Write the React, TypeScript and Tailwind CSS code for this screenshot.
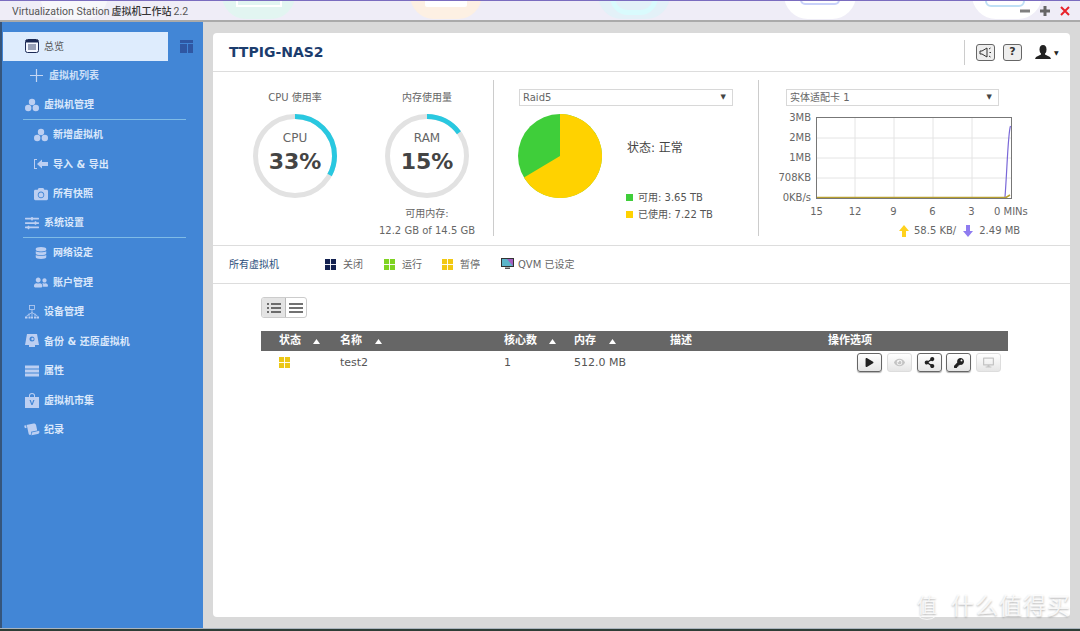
import type { ReactNode } from "react";
import {
  FaCamera,
  FaDatabase,
  FaDesktop,
  FaEye,
  FaKey,
  FaPlay,
  FaScroll,
  FaShareAlt,
  FaSlidersH,
  FaUserFriends,
} from "react-icons/fa";

const cjk = "font-['DejaVu_Sans','Noto_Sans_CJK_SC',sans-serif]";

function Blobs() {
  return (
    <svg viewBox="0 0 14 14" className="w-[14px] h-[14px]" fill="currentColor">
      <circle cx="7" cy="4" r="3.2" />
      <circle cx="3.2" cy="10" r="3.2" />
      <circle cx="10.8" cy="10" r="3.2" />
    </svg>
  );
}

function ImportIcon() {
  return (
    <svg viewBox="0 0 14 14" className="w-[14px] h-[14px]" fill="currentColor">
      <path d="M0 2h3v1H1v8h2v1H0z" />
      <path d="M3 7l5-4.500V5h6v4H8v2.500z" />
    </svg>
  );
}

function BackupIcon() {
  return (
    <svg viewBox="0 0 14 16" className="w-[14px] h-[16px]" fill="currentColor">
      <path d="M2 1h10l2 11H0z" />
      <rect x="4" y="12" width="6" height="2" />
      <circle cx="7" cy="6" r="2.500" fill="#4286d6" />
      <circle cx="7.500" cy="6" r="1.200" />
    </svg>
  );
}

function RowsIcon() {
  return (
    <svg viewBox="0 0 14 12" className="w-[14px] h-[12px]" fill="currentColor">
      <rect y="0.500" width="14" height="3" />
      <rect y="4.500" width="14" height="3" />
      <rect y="8.500" width="14" height="3" />
    </svg>
  );
}

function BagIcon() {
  return (
    <svg viewBox="0 0 14 15" className="w-[14px] h-[15px]" fill="currentColor">
      <path d="M4 4V2.500a3 2.500 0 0 1 6 0V4H9V2.500a2 1.500 0 0 0-4 0V4z" />
      <path d="M0 4h14v11H0z" />
      <path d="M4.500 7h1.300L7 10.500 8.200 7h1.300L7.600 12H6.400z" fill="#4286d6" />
    </svg>
  );
}

function TreeIcon() {
  return (
    <svg viewBox="0 0 14 14" className="w-[14px] h-[14px]" fill="none" stroke="currentColor" strokeWidth="0.800">
      <rect x="4.500" y="0.500" width="5" height="4" />
      <path d="M7 4.500V11M7 7.500L1.500 11M7 7.500L12.500 11M4 8.500V11M10 8.500V11" />
      <path d="M0 11.500h2.500v2H0zM3.500 11.500h2v2h-2zM6 11.500h2v2H6zM9 11.500h2v2H9zM11.500 11.500H14v2h-2.500z" fill="currentColor" stroke="none" />
    </svg>
  );
}

function DashIcon() {
  return (
    <svg viewBox="0 0 14 14" className="w-[14px] h-[14px]">
      <rect x="0.500" y="0.500" width="13" height="13" rx="2" fill="#f5f8ff" stroke="#1c2a55" />
      <rect x="1" y="1" width="12" height="2.500" fill="#1c2a55" />
      <path d="M3 6h8M3 8h8M3 10h8" stroke="#3c4a70" strokeWidth="1" />
    </svg>
  );
}

type NavItem = { label: string; indent: number; icon: ReactNode; line?: boolean };

const nav: NavItem[] = [
  { label: "虚拟机管理", indent: 25, icon: <Blobs />, line: true },
  { label: "新增虚拟机", indent: 34, icon: <Blobs /> },
  { label: "导入 & 导出", indent: 34, icon: <ImportIcon /> },
  { label: "所有快照", indent: 34, icon: <FaCamera size={14} /> },
  { label: "系统设置", indent: 25, icon: <FaSlidersH size={14} />, line: true },
  { label: "网络设定", indent: 34, icon: <FaDatabase size={12} className="mx-px" /> },
  { label: "账户管理", indent: 34, icon: <FaUserFriends size={15} /> },
  { label: "设备管理", indent: 25, icon: <TreeIcon /> },
  { label: "备份 & 还原虚拟机", indent: 25, icon: <BackupIcon /> },
  { label: "属性", indent: 25, icon: <RowsIcon /> },
  { label: "虚拟机市集", indent: 25, icon: <BagIcon /> },
  { label: "纪录", indent: 25, icon: <FaScroll size={15} className="-rotate-12" /> },
];

function Sidebar() {
  return (
    <aside className="w-[203px] shrink-0 bg-[#4286d6] border-l-2 border-[#35557c] pt-[9.500px] font-bold">
      <div className="flex items-center">
        <div className="w-[165px] ml-px h-[29.500px] bg-[#deecfd] flex items-center pl-[22px] gap-[5px] text-[10px] font-normal text-[#555]">
          <DashIcon />
          <span>总览</span>
        </div>
        <svg viewBox="0 0 13 13" className="w-[13px] h-[13px] ml-[12px]" fill="#2f57a3">
          <rect width="13" height="3" />
          <rect y="4" width="7" height="9" />
          <rect x="8" y="4" width="5" height="9" />
        </svg>
      </div>
      <div className="h-[29.500px] flex items-center pl-[28px] gap-[6px] text-[10px] text-[#cfe0f8]">
        <svg viewBox="0 0 13 13" className="w-[13px] h-[13px]" stroke="#c4d6f3" strokeWidth="1.200">
          <path d="M6.500 0v13M0 6.500h13" />
        </svg>
        <span>虚拟机列表</span>
      </div>
      {nav.map((item) => (
        <div key={item.label} className={item.line ? "mr-[17px] ml-[21px] border-b border-[#7fbbe6]" : ""}>
          <div
            className={`${item.line ? "h-[28.500px]" : "h-[29.500px]"} flex items-center gap-[5px] text-[10px] text-[#dbe8fb]`}
            style={{ paddingLeft: item.line ? item.indent - 23 : item.indent - 2 }}
          >
            <span className="w-[14px] flex justify-center text-[#bccff2]">{item.icon}</span>
            <span className="whitespace-nowrap">{item.label}</span>
          </div>
        </div>
      ))}
    </aside>
  );
}

function Gauge({ label, value }: { label: string; value: number }) {
  return (
    <div className="relative w-[84px] h-[84px]">
      <svg viewBox="0 0 84 84" className="w-[84px] h-[84px] -rotate-90">
        <circle cx="42" cy="42" r="39.500" fill="none" stroke="#e2e2e2" strokeWidth="5" />
        <circle
          cx="42"
          cy="42"
          r="39.500"
          fill="none"
          stroke="#29c8e0"
          strokeWidth="5"
          pathLength="100"
          strokeDasharray={`${value} 100`}
        />
      </svg>
      <div className="absolute inset-0 flex flex-col items-center pt-[17px]">
        <span className="text-[12px] leading-[14px] text-[#666]">{label}</span>
        <span className="text-[22px] leading-[28px] mt-[3px] font-bold text-[#444]">{value}%</span>
      </div>
    </div>
  );
}

function Select({ value, width }: { value: string; width: string }) {
  return (
    <div className={`${width} h-[17px] border border-[#d8d8d8] flex items-center justify-between pl-[3px] pr-[6px] text-[10px] text-[#666]`}>
      <span>{value}</span>
      <span className="text-[7px] text-[#444]">▼</span>
    </div>
  );
}

function PieBlock() {
  return (
    <div className="w-[265px] shrink-0 border-l border-[#ccc] h-[156px] pl-[25px] pt-[9px]">
      <Select value="Raid5" width="w-[214px]" />
      <div className="flex mt-[8px] -ml-px">
        <svg viewBox="0 0 84 84" className="w-[84px] h-[84px] shrink-0">
          <circle cx="42" cy="42" r="42" fill="#3fce3a" />
          <path d="M42 42V0A42 42 0 1 1 6 63.600Z" fill="#ffd200" />
        </svg>
        <div className="ml-[25px] text-[10px] text-[#555]">
          <div className="mt-[26px] h-[16px] leading-[16px] text-[12px] text-[#444]">状态: 正常</div>
          <div className="mt-[33px] -ml-px flex items-center gap-[5px] h-[17px]">
            <span className="w-[7px] h-[7px] bg-[#3fce3a]" />
            可用: 3.65 TB
          </div>
          <div className="-ml-px flex items-center gap-[5px] h-[17px]">
            <span className="w-[7px] h-[7px] bg-[#ffd200]" />
            已使用: 7.22 TB
          </div>
        </div>
      </div>
    </div>
  );
}

function NetChart() {
  return (
    <div className="flex-1 border-l border-[#ccc] h-[156px] pl-[27px] pt-[9px]">
      <Select value="实体适配卡 1" width="w-[213px]" />
      <div className="flex mt-[5px] -ml-[27px]">
        <div className="w-[52px] h-[94px] flex flex-col justify-between items-end text-[10px] leading-[14px] text-[#666]">
          <span>3MB</span>
          <span>2MB</span>
          <span>1MB</span>
          <span>708KB</span>
          <span>0KB/s</span>
        </div>
        <svg viewBox="0 0 196 82" className="w-[196px] h-[82px] ml-[5px] mt-[6px]" fill="none">
          <path d="M0 21h196M0 41h196M0 61h196M39 0v82M78 0v82M117 0v82M156 0v82" stroke="#e4e4e4" />
          <path d="M189 80C191 55 192 15 194.500 9" stroke="#7a68d8" strokeWidth="1.200" />
          <path d="M1 80.500H190L194 78" stroke="#b8a030" strokeWidth="1.500" />
          <rect x="0.500" y="0.500" width="195" height="81" stroke="#777" />
        </svg>
      </div>
      <div className="flex ml-[11px] text-[10px] leading-[14px] text-[#666] whitespace-nowrap">
        <span className="w-[39px] text-center">15</span>
        <span className="w-[38px] text-center">12</span>
        <span className="w-[39px] text-center">9</span>
        <span className="w-[39px] text-center">6</span>
        <span className="w-[39px] text-center">3</span>
        <span className="pl-[3px]">0 MINs</span>
      </div>
      <div className="flex items-center ml-[113px] mt-[5px] text-[10px] leading-[14px] text-[#666] whitespace-nowrap">
        <svg viewBox="0 0 10 12" className="w-[10px] h-[12px] mr-[5px]" fill="#ffd21e">
          <path d="M5 0l5 6H7v6H3V6H0z" />
        </svg>
        58.5 KB/
        <svg viewBox="0 0 10 12" className="w-[10px] h-[12px] ml-[7px] mr-[6px]" fill="#8f7cf0">
          <path d="M5 12L0 6h3V0h4v6h3z" />
        </svg>
        2.49 MB
      </div>
    </div>
  );
}

function Tile({ color }: { color: string }) {
  return (
    <svg viewBox="0 0 12 12" className="w-[11px] h-[11px] shrink-0" fill={color}>
      <rect width="5.500" height="5.500" />
      <rect x="6.500" width="5.500" height="5.500" />
      <rect y="6.500" width="5.500" height="5.500" />
      <rect x="6.500" y="6.500" width="5.500" height="5.500" />
    </svg>
  );
}

function Legend({ color, label, width }: { color: string; label: string; width: string }) {
  return (
    <div className={`${width} flex items-center gap-[7px]`}>
      <Tile color={color} />
      <span>{label}</span>
    </div>
  );
}

function Arrow() {
  return (
    <svg viewBox="0 0 7 5" className="w-[7px] h-[5px]" fill="#fff">
      <path d="M3.500 0L7 5H0z" />
    </svg>
  );
}

function HeadCell({ label, gap }: { label: string; gap: string }) {
  return (
    <div className={`flex items-center ${gap}`}>
      <span>{label}</span>
      <Arrow />
    </div>
  );
}

function ActionButton({ children, off }: { children: ReactNode; off?: boolean }) {
  return (
    <div
      className={`w-[25px] h-[19px] rounded-[3px] border flex items-center justify-center bg-gradient-to-b from-white to-[#e6e6e6] ${
        off ? "border-[#ddd] text-[#c4c4c4]" : "border-[#666] text-[#222] shadow-[0_1px_1px_rgba(0,0,0,.3)]"
      }`}
    >
      {children}
    </div>
  );
}

function VmTable() {
  return (
    <div className="ml-[48px] mr-[62px] text-[10px]">
      <div className="grid grid-cols-[61px_164px_70px_96px_158px_1fr] h-[20px] pl-[18px] items-center bg-[#666] text-white font-bold text-[11px]">
        <HeadCell label="状态" gap="gap-[12px]" />
        <HeadCell label="名称" gap="gap-[13px]" />
        <HeadCell label="核心数" gap="gap-[12px]" />
        <HeadCell label="内存" gap="gap-[13px]" />
        <span>描述</span>
        <span>操作选项</span>
      </div>
      <div className="grid grid-cols-[61px_164px_70px_96px_1fr] h-[23px] pl-[18px] items-center text-[#555] text-[11px]">
        <Tile color="#ecc715" />
        <span className="pt-[1px]">test2</span>
        <span className="pt-[1px]">1</span>
        <span className="pt-[1px]">512.0 MB</span>
        <div className="flex justify-end gap-[4.750px] pr-[7px]">
          <ActionButton>
            <FaPlay size={9} />
          </ActionButton>
          <ActionButton off>
            <FaEye size={11} />
          </ActionButton>
          <ActionButton>
            <FaShareAlt size={11} />
          </ActionButton>
          <ActionButton>
            <FaKey size={10} />
          </ActionButton>
          <ActionButton off>
            <FaDesktop size={11} />
          </ActionButton>
        </div>
      </div>
    </div>
  );
}

function Card() {
  return (
    <section className="w-[857px] h-[584px] bg-white rounded-[4px] flex flex-col">
      <header className="h-[39px] shrink-0 border-b border-[#ddd] flex items-center pl-[16px]">
        <h1 className="text-[14px] font-bold text-[#1c3d6e]">TTPIG-NAS2</h1>
        <div className="ml-auto flex items-center h-[25px] border-l border-[#ccc] mr-[10px] pl-[11px] gap-[8px]">
          <div className="w-[19px] h-[17px] rounded-[3px] border border-[#666] bg-[#eee] flex items-center justify-center">
            <svg viewBox="0 0 13 11" className="w-[13px] h-[11px]" fill="none" stroke="#333">
              <path d="M1 4h2l5-3v9L3 7H1z" />
              <path d="M10 2l1.500-1M10.500 5.500H12M10 9l1.500 1" />
            </svg>
          </div>
          <div className="w-[19px] h-[17px] rounded-[3px] border border-[#666] bg-[#eee] flex items-center justify-center text-[11px] font-bold text-[#333]">
            ?
          </div>
          <div className="flex items-center ml-[5px] gap-[3px] text-[#222]">
            <svg viewBox="0 0 16 14" className="w-[16px] h-[14px]" fill="currentColor">
              <ellipse cx="8" cy="4.500" rx="3.500" ry="4.500" />
              <path d="M6 8h4v1.500l5 2.500 1 2H0l1-2 5-2.500z" />
            </svg>
            <span className="w-[6px] text-[6px]">▼</span>
          </div>
        </div>
      </header>

      <div className="h-[174px] shrink-0 border-b border-[#ddd] flex pt-[8px]">
        <div className="w-[280px] shrink-0 flex pl-[16px] pt-[11px] text-[10px] text-[#666]">
          <div className="w-[133px]">
            <div className="w-[132px] flex flex-col items-center">
              <span className="h-[14px] leading-[14px]">CPU 使用率</span>
              <div className="mt-[9px]">
                <Gauge label="CPU" value={33} />
              </div>
            </div>
          </div>
          <div className="w-[130px] flex flex-col items-center">
            <span className="h-[14px] leading-[14px]">内存使用量</span>
            <div className="mt-[9px]">
              <Gauge label="RAM" value={15} />
            </div>
            <span className="mt-[7px] leading-[17px]">可用内存:</span>
            <span className="leading-[17px] whitespace-nowrap">12.2 GB of 14.5 GB</span>
          </div>
        </div>
        <PieBlock />
        <NetChart />
      </div>

      <div className="h-[38px] shrink-0 border-b border-[#ddd] flex items-center pl-[16px] pb-[1px] text-[10px] text-[#666]">
        <span className="w-[96px] text-[#2d4f7c]">所有虚拟机</span>
        <Legend color="#12204f" label="关闭" width="w-[59px]" />
        <Legend color="#7ed321" label="运行" width="w-[58px]" />
        <Legend color="#f2c811" label="暂停" width="w-[59px]" />
        <div className="flex items-center gap-[4px]">
          <svg viewBox="0 0 13 12" className="w-[13px] h-[12px]">
            <rect width="13" height="9" fill="#333" />
            <rect x="1" y="1" width="11" height="7" fill="#5bb5c9" />
            <path d="M6 1h6v7z" fill="#a35ec0" />
            <rect x="4" y="9.500" width="5" height="1.500" fill="#555" />
          </svg>
          <span>QVM 已设定</span>
        </div>
      </div>

      <div className="flex ml-[48px] mt-[13px] mb-[13px] w-[46px] h-[21px] rounded-[3px] border border-[#ccc] overflow-hidden">
        <div className="w-[23px] bg-[#e4e4e4] flex items-center justify-center">
          <svg viewBox="0 0 14 10" className="w-[14px] h-[10px]" stroke="#444" strokeWidth="1.500">
            <path d="M0 1h2M4 1h10M0 5h2M4 5h10M0 9h2M4 9h10" />
          </svg>
        </div>
        <div className="flex-1 border-l border-[#bbb] flex items-center justify-center">
          <svg viewBox="0 0 14 10" className="w-[14px] h-[10px]" stroke="#444" strokeWidth="1.500">
            <path d="M0 1h14M0 5h14M0 9h14" />
          </svg>
        </div>
      </div>

      <VmTable />
    </section>
  );
}

function TitleBar() {
  return (
    <div className="relative h-[22px] shrink-0 overflow-hidden bg-[#efedf7] border-t border-[#7a6cbf] border-b-2 border-b-[#aaa]">
      {/* wallpaper shapes showing through the title bar */}
      <div className="absolute left-[40px] -top-[30px] w-[68px] h-[48px] rounded-[24px] bg-[#f7f7fb]" />
      <div className="absolute left-[222px] -top-[30px] w-[73px] h-[48px] rounded-[24px] bg-[#e2f5f1]" />
      <div className="absolute left-[236px] -top-[2px] w-[46px] h-[8px] border-2 border-t-0 border-white" />
      <div className="absolute left-[410px] -top-[30px] w-[72px] h-[48px] rounded-[24px] bg-[#fdf0e3]" />
      <div className="absolute left-[425px] -top-[2px] w-[42px] h-[8px] rounded-[2px] bg-white" />
      <div className="absolute left-[598px] -top-[30px] w-[72px] h-[48px] rounded-[24px] bg-[#e3f1f8]" />
      <div className="absolute left-[610px] -top-[22px] w-[48px] h-[36px] rounded-full border-[5px] border-[#d9fbfd]" />
      <div className="absolute left-[784px] -top-[30px] w-[72px] h-[48px] rounded-[24px] bg-white" />
      <div className="absolute left-[800px] -top-[6px] w-[40px] h-[10px] rounded-[5px] border-2 border-[#c9d2fa]" />
      <div className="absolute left-[972px] -top-[30px] w-[70px] h-[48px] rounded-[24px] bg-white" />
      <div className="absolute left-[985px] -top-[6px] w-[40px] h-[12px] rounded-full border-2 border-[#bfe0f5]" />
      <div className="relative flex items-center h-full pl-[12px] text-[10.500px] text-[#555] font-['Roboto','Noto_Sans_CJK_SC',sans-serif] whitespace-nowrap">
        <span className="pt-[2px]">Virtualization Station</span>
        <span className="ml-[2px] pt-[2px] text-[10px] font-medium text-[#333]">虚拟机工作站</span>
        <span className="ml-[2px] pt-[2px]">2.2</span>
        <div className="ml-auto flex items-center gap-[10px] pr-[10px]">
          <svg viewBox="0 0 10 10" className="w-[10px] h-[10px]" fill="#808080">
            <rect y="3.500" width="10" height="3" />
          </svg>
          <svg viewBox="0 0 10 10" className="w-[10px] h-[10px]" fill="#666">
            <path d="M3.500 0h3v3.500H10v3H6.500V10h-3V6.500H0v-3h3.500z" />
          </svg>
          <svg viewBox="0 0 10 10" className="w-[10px] h-[10px]" stroke="#e8222a" strokeWidth="2">
            <path d="M1 1l8 8M9 1l-8 8" />
          </svg>
        </div>
      </div>
    </div>
  );
}

export default function App() {
  return (
    <div className={`relative w-[1080px] h-[631px] overflow-hidden flex flex-col bg-[#d9d9d9] ${cjk}`}>
      <TitleBar />
      <div className="flex h-[607px] shrink-0 border-b border-[#aab4bd]">
        <Sidebar />
        <main className="flex-1 pl-[10px] pt-[11px]">
          <Card />
        </main>
      </div>
      <div className="h-[2px] bg-[#2e3d36]" />
      {/* watermark */}
      <div className="absolute left-[913px] top-[592px] flex items-center gap-[10px] text-white/80 [text-shadow:0_1px_2px_rgba(0,0,0,.3)]">
        <span className="w-[28px] h-[28px] rounded-full border border-white/70 flex items-center justify-center text-[20px] leading-none">值</span>
        <span className="text-[23px] leading-none tracking-[1px] whitespace-nowrap">什么值得买</span>
      </div>
    </div>
  );
}
